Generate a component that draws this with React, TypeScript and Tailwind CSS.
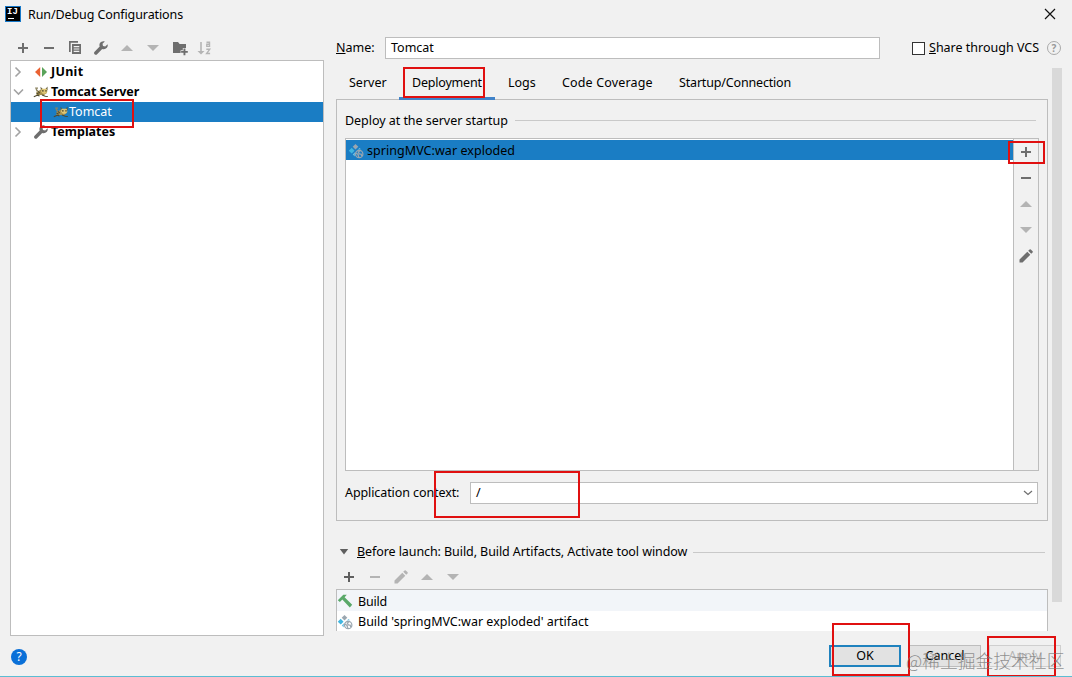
import { ReactNode } from "react";
import clsx from "clsx";

type IconProps = { className?: string };

const PlusIcon = ({ className }: IconProps) => (
    <svg viewBox="0 0 16 16" className={clsx("size-4 shrink-0", className)}>
        <path d="M7 3h2v4h4v2H9v4H7V9H3V7h4z" fill="currentColor" />
    </svg>
);

const MinusIcon = ({ className }: IconProps) => (
    <svg viewBox="0 0 16 16" className={clsx("size-4 shrink-0", className)}>
        <path d="M3 7h10v2H3z" fill="currentColor" />
    </svg>
);

const UpIcon = ({ className }: IconProps) => (
    <svg viewBox="0 0 16 16" className={clsx("size-4 shrink-0", className)}>
        <path d="M8 5l6 6H2z" fill="currentColor" />
    </svg>
);

const DownIcon = ({ className }: IconProps) => (
    <svg viewBox="0 0 16 16" className={clsx("size-4 shrink-0", className)}>
        <path d="M8 11L2 5h12z" fill="currentColor" />
    </svg>
);

const CopyIcon = () => (
    <svg viewBox="0 0 16 16" className="size-4 shrink-0">
        <path d="M2 1h9v1.700H3.700V12H2z" fill="#6e6e6e" />
        <path
            d="M5 4h9v10H5zM6.700 6v1.200h5.600V6zM6.700 8.400v1.200h5.600V8.400zM6.700 10.800V12h5.600v-1.200z"
            fill="#6e6e6e"
            fillRule="evenodd"
        />
    </svg>
);

const WrenchIcon = () => (
    <svg viewBox="0 0 16 16" className="size-4 shrink-0">
        <path
            d="M14.600 4.200l-2.400 2.300-2.200-.5-.5-2.200 2.300-2.400C9.900.800 8 1.500 7 3.100c-.7 1.100-.7 2.400-.3 3.500L1.600 11.700c-.7.700-.7 1.800 0 2.500s1.800.7 2.500 0l5.100-5.100c1.200.4 2.600.3 3.700-.5 1.500-1 2.200-2.800 1.700-4.400z"
            fill="#6e6e6e"
        />
    </svg>
);

const FolderIcon = () => (
    <svg viewBox="0 0 16 16" className="ml-0.5 size-4 shrink-0">
        <path d="M1 2h5l1.600 2H14v4h-3.200v2.200H8.600V13H1z" fill="#6e6e6e" />
        <path
            d="M11.500 8.500h1.900v2.400h2.400v1.900h-2.400v2.400h-1.900v-2.400H9.100v-1.900h2.400z"
            fill="#6e6e6e"
        />
    </svg>
);

const SortIcon = () => (
    <svg viewBox="0 0 16 16" className="size-4 shrink-0 text-[#b4b4b4]">
        <path d="M3.200 2h1.600v9h2.700L4 14.500.500 11h2.700z" fill="currentColor" />
        <path
            d="M9.500 2.200h3v4.200H9.800V4.300h2.700M9.300 9.300h3.400L9.600 13.500h3.500"
            fill="none"
            stroke="currentColor"
            strokeWidth="1.400"
        />
    </svg>
);

const PencilIcon = ({ className }: IconProps) => (
    <svg viewBox="0 0 16 16" className={clsx("size-4 shrink-0", className)}>
        <path
            d="M1.500 14.500v-3l7.800-7.800 3 3-7.800 7.800zM10.200 2.800l1.400-1.400q.6-.5 1.200 0l1.800 1.800q.5.6 0 1.200l-1.400 1.400z"
            fill="currentColor"
        />
    </svg>
);

const JUnitIcon = () => (
    <svg viewBox="0 0 16 16" className="size-4 shrink-0">
        <path d="M7.200 3v10L2 8z" fill="#ea6233" />
        <path d="M9 3v10L14 8z" fill="#5aa35a" />
    </svg>
);

const TomcatIcon = () => (
    <svg viewBox="0 0 16 16" className="size-4 shrink-0">
        <path d="M2 3.500h3v1.200H3.500L6 7.500H3.500z" fill="#8b8361" />
        <path d="M3.500 8L8 5.500h5.500L14 9l-3 2L7 11l-3.500 1z" fill="#a8924f" />
        <path d="M7.500 2.800L10 5.200 8 7zM14.500 2.500v4l-2.200-1.300z" fill="#5b5433" />
        <path d="M8.500 4.800h5.300l.6 3.200-2.200 1.700H9.800L8 7.800z" fill="#dfc675" />
        <path d="M9.200 6.200h1.300v1.300H9.200zM12.400 6.200h1.200v1.300h-1.200z" fill="#27251a" />
        <path
            d="M5 7.300l1.800 1.800M3.500 9l2.200 1.300M.8 12.800l3.400-1.500 2.300.6M9 11l3.300 1.300 2.500.2"
            stroke="#4d492f"
            strokeWidth="1.100"
            fill="none"
        />
    </svg>
);

const ArtifactIcon = () => (
    <svg viewBox="0 0 16 16" className="size-4 shrink-0">
        <path d="M7.500 1l2.800 2.800-2.800 2.800-2.800-2.800z" fill="#9aa7b0" />
        <path d="M3.700 4.800l2.900 2.900-2.900 2.900L.8 7.700z" fill="#40b6e0" />
        <path d="M11.300 5l1.900 1.200-2.700.2-1.300 1z" fill="#72c2e2" />
        <path d="M7.500 8.800L4.700 11.500 6.800 13.500q-.4-2.600.7-4.700z" fill="#72c2e2" />
        <circle cx="11.200" cy="11" r="3.700" fill="none" stroke="#9aa7b0" strokeWidth="1.200" />
        <path
            d="M8 10l2 1.500.8 2.700M12 7.600l-1.700 1.600 1 1.700 1.800.1.700 2"
            stroke="#9aa7b0"
            strokeWidth="1.300"
            fill="none"
        />
    </svg>
);

const HammerIcon = () => (
    <svg viewBox="0 0 16 16" className="size-4 shrink-0">
        <path d="M.8 6.300L6.300.8h3.500L7.600 3.200l7.600 7.600-2.400 2.800-7.500-8-2.400 2.300z" fill="#59a869" />
    </svg>
);

const Chevron = ({ open }: { open?: boolean }) => (
    <svg viewBox="0 0 16 16" className="-ml-px size-4 shrink-0">
        <path
            d={open ? "M4 5.500l4.500 4.500L13 5.500" : "M5.500 3.500L10 8l-4.500 4.500"}
            fill="none"
            stroke="#a3a3a3"
            strokeWidth="1.600"
        />
    </svg>
);

const Tool = ({ children }: { children: ReactNode }) => (
    <div className="flex size-[26px] shrink-0 items-center justify-center">{children}</div>
);

const tabs = [
    { name: "Server", box: "w-[63px]" },
    { name: "Deployment", box: "w-24 tracking-[-0.2px]" },
    { name: "Logs", box: "w-[54px]" },
    { name: "Code Coverage", box: "w-[117px] tracking-[0.15px]" },
    { name: "Startup/Connection", box: "w-[138px] tracking-[-0.17px]" },
];

function Tree() {
    return (
        <div className="h-[576px] border border-[#bdbdbd] bg-white pt-px font-bold">
            <div className="flex h-5 items-center">
                <Chevron />
                <span className="w-[7px]" />
                <JUnitIcon />
                <span className="pl-0.5 tracking-[0.3px]">JUnit</span>
            </div>
            <div className="flex h-5 items-center">
                <Chevron open />
                <span className="w-[7px]" />
                <TomcatIcon />
                <span className="pl-0.5 tracking-[-0.06px]">Tomcat Server</span>
            </div>
            <div className="flex h-5 items-center bg-[#1a7dc4] pl-[42px] font-normal text-white">
                <TomcatIcon />
                <span>Tomcat</span>
            </div>
            <div className="flex h-5 items-center">
                <Chevron />
                <span className="w-[7px]" />
                <WrenchIcon />
                <span className="pl-0.5">Templates</span>
            </div>
        </div>
    );
}

function DeploymentPanel() {
    return (
        <div className="h-[422px] w-[712px] border border-[#bdbdbd] px-2">
            <div className="flex h-[38px] items-center pt-1 pb-px">
                <span className="w-[170px] tracking-[-0.04px]">Deploy at the server startup</span>
                <span className="h-px w-[521px] bg-[#c9c9c9]" />
            </div>
            <div className="flex h-[333px] w-[694px] border border-[#bdbdbd]">
                <div className="w-[667px] bg-white pt-px">
                    <div className="flex h-5 items-center bg-[#1a7dc4] pt-px pl-0.5">
                        <ArtifactIcon />
                        <span className="pl-[3px] tracking-[0.05px]">springMVC:war exploded</span>
                    </div>
                </div>
                <div className="w-[25px] border-l border-[#bdbdbd] text-[#6e6e6e]">
                    <div className="-ml-px">
                        <Tool>
                            <PlusIcon />
                        </Tool>
                        <Tool>
                            <MinusIcon />
                        </Tool>
                        <Tool>
                            <UpIcon className="text-[#b4b4b4]" />
                        </Tool>
                        <Tool>
                            <DownIcon className="text-[#b4b4b4]" />
                        </Tool>
                        <Tool>
                            <PencilIcon />
                        </Tool>
                    </div>
                </div>
            </div>
            <div className="mt-[11px] flex h-[22px] items-center">
                <span className="w-[125px] tracking-[-0.09px]">Application context:</span>
                <div className="flex h-[22px] w-[568px] items-center justify-between border border-[#bdbdbd] bg-white pr-1 pl-[5px]">
                    <span>/</span>
                    <svg viewBox="0 0 10 6" className="h-1.5 w-2.5">
                        <path d="M1 1l4 3.500L9 1" fill="none" stroke="#6e6e6e" strokeWidth="1.200" />
                    </svg>
                </div>
            </div>
        </div>
    );
}

function BeforeLaunch() {
    return (
        <div className="mt-5 w-[712px]">
            <div className="flex h-[22px] items-center">
                <svg viewBox="0 0 10 6" className="mr-2 ml-[3px] h-1.5 w-2.5">
                    <path d="M.8 0h8.400L5 5.500z" fill="#5f5f5f" />
                </svg>
                <span className="w-[336px] tracking-[-0.08px]">
                    <u>B</u>efore launch: Build, Build Artifacts, Activate tool window
                </span>
                <span className="h-px w-[352px] bg-[#c9c9c9]" />
            </div>
            <div className="flex h-[26px] pt-px text-[#b4b4b4]">
                <Tool>
                    <PlusIcon className="text-[#5f5f5f]" />
                </Tool>
                <Tool>
                    <MinusIcon />
                </Tool>
                <Tool>
                    <PencilIcon />
                </Tool>
                <Tool>
                    <UpIcon />
                </Tool>
                <Tool>
                    <DownIcon />
                </Tool>
            </div>
            <div className="border border-b-0 border-[#bdbdbd] bg-white">
                <div className="flex h-[21px] items-center bg-[#f2f5f9] pt-0.5">
                    <HammerIcon />
                    <span className="pl-[5px] tracking-[-0.2px]">Build</span>
                </div>
                <div className="flex h-5 items-center pt-px">
                    <ArtifactIcon />
                    <span className="pl-[5px]">Build 'springMVC:war exploded' artifact</span>
                </div>
            </div>
        </div>
    );
}

const Mark = ({ className }: IconProps) => (
    <div className={clsx("absolute border-2 border-[#e01010]", className)} />
);

function App() {
    return (
        <div className="relative h-[677px] w-[1072px] overflow-hidden border-b border-[#5bbdd3] bg-[#f1f1f1] font-['Noto_Sans','Noto_Sans_CJK_SC',sans-serif] text-[12.5px] leading-5 whitespace-nowrap text-black">
            <header className="flex h-[30px] items-center pl-[5px]">
                <div className="-mt-0.5 flex size-4 flex-col border border-[#1778c8] bg-black pt-px pl-px font-['Liberation_Mono',monospace] text-[9px] leading-[9px] font-bold text-white">
                    <span>IJ</span>
                    <span className="mt-px ml-px h-px w-1.5 bg-white" />
                </div>
                <span className="pl-[7px] tracking-[-0.1px]">Run/Debug Configurations</span>
                <svg viewBox="0 0 12 12" className="-mt-0.5 mr-4 ml-auto size-3">
                    <path d="M1 1l10 10M11 1L1 11" stroke="#111" strokeWidth="1.200" />
                </svg>
            </header>

            <main className="flex h-[606px] pl-2.5">
                <aside className="w-[314px] pt-1">
                    <div className="flex h-[26px] items-center pt-0.5 text-[#6e6e6e]">
                        <Tool>
                            <PlusIcon />
                        </Tool>
                        <Tool>
                            <MinusIcon />
                        </Tool>
                        <Tool>
                            <CopyIcon />
                        </Tool>
                        <Tool>
                            <WrenchIcon />
                        </Tool>
                        <Tool>
                            <UpIcon className="text-[#b4b4b4]" />
                        </Tool>
                        <Tool>
                            <DownIcon className="text-[#b4b4b4]" />
                        </Tool>
                        <Tool>
                            <FolderIcon />
                        </Tool>
                        <Tool>
                            <SortIcon />
                        </Tool>
                    </div>
                    <Tree />
                </aside>

                <section className="ml-3 w-[716px]">
                    <div className="mt-[7px] flex h-[22px] w-[726px] items-center">
                        <span className="w-[49px]">
                            <u>N</u>ame:
                        </span>
                        <div className="flex h-[22px] w-[495px] items-center border border-[#bdbdbd] bg-white pl-[5px]">
                            Tomcat
                        </div>
                        <span className="ml-8 size-[13px] border border-[#333] bg-white" />
                        <span className="w-[122px] pl-1">
                            <u>S</u>hare through VCS
                        </span>
                        <span className="flex size-3.5 shrink-0 items-center justify-center rounded-full border border-[#aaa] text-[10px] font-bold text-[#999]">
                            ?
                        </span>
                    </div>
                    <nav className="flex h-10 pt-1.5">
                        {tabs.map((tab) => (
                            <div
                                key={tab.name}
                                className={clsx(
                                    "relative z-10 h-[35px] pt-2 pl-[13px]",
                                    tab.box,
                                    tab.name === "Deployment" && "border-b-3 border-[#4083c9]"
                                )}
                            >
                                {tab.name}
                            </div>
                        ))}
                    </nav>
                    <DeploymentPanel />
                    <BeforeLaunch />
                </section>
                <div className="mt-[38px] h-[534px] w-2.5 bg-[#d9d9d9]" />
            </main>

            <footer className="flex h-10 items-center pt-0.5 pr-[11px] pl-[11px]">
                <span className="flex size-4 items-center justify-center rounded-full bg-[#0a70d8] text-[12px] text-white">
                    ?
                </span>
                <button className="-mt-0.5 ml-auto h-[22px] w-[72px] border-2 border-[#1f82be] bg-[#e2e2e2] leading-[18px]">
                    OK
                </button>
                <button className="-mt-0.5 ml-2 h-[22px] w-[72px] border border-[#bdbdbd] bg-[#e2e2e2] leading-5">
                    Cancel
                </button>
                <button className="-mt-0.5 ml-2 h-[22px] w-[72px] border border-[#cfcfcf] bg-[#ececec] leading-5 text-[#b4b4b4]">
                    Apply
                </button>
            </footer>

            <Mark className="top-[99px] left-10 h-[29px] w-[94px]" />
            <Mark className="top-[67px] left-[403px] z-20 h-[31px] w-[82px]" />
            <Mark className="top-[141px] left-[1008px] h-[23px] w-[37px]" />
            <Mark className="top-[471px] left-[434px] h-[47px] w-[146px]" />
            <Mark className="top-[623px] left-[832px] h-[53px] w-[78px]" />
            <Mark className="top-[636px] left-[987px] h-[41px] w-[69px]" />
            <div className="absolute top-[648px] left-[906px] font-['Noto_Sans_CJK_SC',sans-serif] text-[17.8px] leading-6 font-light text-[#777]/80">
                @稀土掘金技术社区
            </div>
        </div>
    );
}

export default App;
